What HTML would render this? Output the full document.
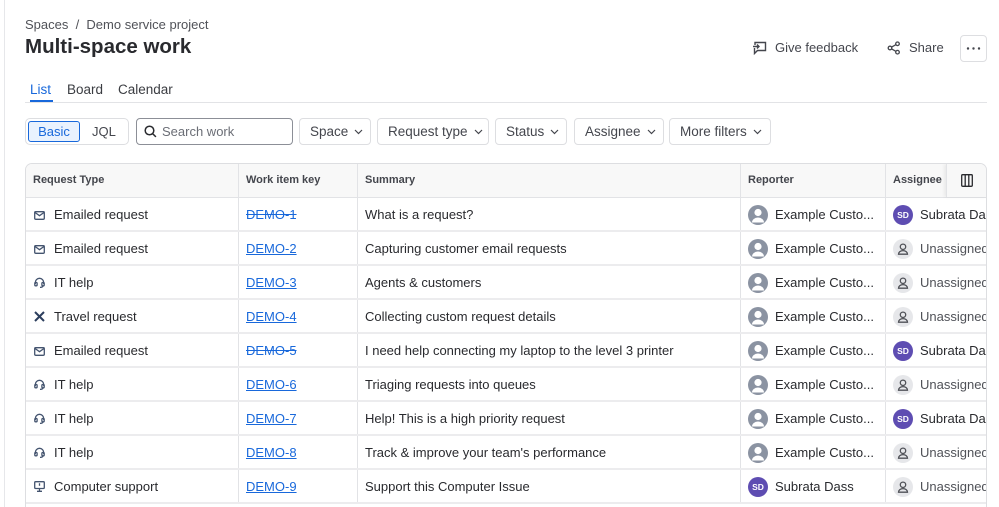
<!DOCTYPE html>
<html><head><meta charset="utf-8">
<style>
*{box-sizing:border-box;margin:0;padding:0}
html,body{width:999px;height:507px;overflow:hidden}
body{background:#fff;font-family:"Liberation Sans",sans-serif;color:#292a2e;position:relative}
.a{position:absolute;white-space:nowrap}
.btn{position:absolute;height:27px;top:118px;border:1px solid #dddee1;border-radius:4px;font-size:13.5px;color:#44464d;display:flex;align-items:center;padding-left:10px}
.btn svg{margin-left:6px}
.tbl{position:absolute;left:25px;top:163px;width:962px;height:344px;border:1px solid #dddee1;border-bottom:none;border-radius:7px 7px 0 0;overflow:hidden}
.hd{position:absolute;left:0;top:0;width:100%;height:34px;background:#f8f8f8;border-bottom:1px solid #e2e3e6}
.hc{position:absolute;top:0;height:33px;line-height:33px;font-size:11px;font-weight:bold;color:#44464d;padding-left:7px;border-left:1px solid #e2e3e6}
.row{position:absolute;left:0;width:100%;height:34px;border-bottom:2px solid #ececee}
.c{position:absolute;top:0;height:32px;line-height:33px;font-size:13px;color:#292a2e;border-left:1px solid #e2e3e6;white-space:nowrap;overflow:hidden}
.lk{color:#1868db;text-decoration:underline}
.st{text-decoration:line-through}
.av{display:inline-block;width:20px;height:20px;border-radius:50%;vertical-align:middle;margin-right:7px;position:relative;top:-1px;text-align:center;line-height:20px;font-size:8.5px;color:#fff;font-weight:bold}
.sd{background:#5e4db2}
.un{background:#e6e7ea}
.ex{background:#8b93a2}
</style></head><body>
<div class="a" style="left:4px;top:0;width:1px;height:507px;background:#e6e7ea"></div>
<div class="a" style="left:25px;top:17px;font-size:13px;color:#505258">Spaces &nbsp;/&nbsp; Demo service project</div>
<div class="a" style="left:25px;top:35px;font-size:20.5px;font-weight:bold;color:#292a2e">Multi-space work</div>

<svg class="a" style="left:752px;top:41px" width="15" height="14" viewBox="0 0 15 14" fill="none" stroke="#44464d" stroke-width="1.4"><path d="M3 4V1.5h10.5v8H5.5L2.5 12.5V7"/><path d="M1 5.5h6M5 3.5l2 2-2 2"/></svg>
<div class="a" style="left:775px;top:40px;font-size:13px;color:#44464d">Give feedback</div>
<svg class="a" style="left:887px;top:41px" width="14" height="14" viewBox="0 0 14 14" fill="none" stroke="#44464d" stroke-width="1.3"><circle cx="3" cy="7" r="1.8"/><circle cx="10.5" cy="2.8" r="1.8"/><circle cx="10.5" cy="11.2" r="1.8"/><path d="M4.6 6.1l4.3-2.4M4.6 7.9l4.3 2.4"/></svg>
<div class="a" style="left:909px;top:40px;font-size:13px;color:#44464d">Share</div>
<div class="a" style="left:960px;top:35px;width:27px;height:27px;border:1px solid #dddee1;border-radius:4px"></div>
<svg class="a" style="left:966px;top:47px" width="15" height="3" viewBox="0 0 15 3" fill="#44464d"><circle cx="2" cy="1.5" r="1.2"/><circle cx="7.5" cy="1.5" r="1.2"/><circle cx="13" cy="1.5" r="1.2"/></svg>

<div class="a" style="left:30px;top:82px;font-size:13.5px;color:#1868db">List</div>
<div class="a" style="left:30px;top:100px;width:23px;height:2px;background:#1868db"></div>
<div class="a" style="left:67px;top:82px;font-size:13.5px;color:#3b3d42">Board</div>
<div class="a" style="left:118px;top:82px;font-size:13.5px;color:#3b3d42">Calendar</div>
<div class="a" style="left:25px;top:102px;width:962px;height:1px;background:#e2e3e6"></div>

<div class="a" style="left:25px;top:118px;width:104px;height:27px;border:1px solid #dddee1;border-radius:5px"></div>
<div class="a" style="left:28px;top:121px;width:52px;height:21px;border:1px solid #1868db;background:#e9f2fe;border-radius:3px;font-size:13px;color:#1868db;text-align:center;line-height:19px">Basic</div>
<div class="a" style="left:92px;top:124px;font-size:13px;color:#44464d">JQL</div>
<div class="a" style="left:136px;top:118px;width:157px;height:27px;border:1px solid #8c8f97;border-radius:4px"></div>
<svg class="a" style="left:144px;top:125px" width="13" height="13" viewBox="0 0 13 13" fill="none" stroke="#292a2e" stroke-width="1.5"><circle cx="5.5" cy="5.5" r="4.3"/><path d="M8.6 8.6l3.3 3.3"/></svg>
<div class="a" style="left:162px;top:124px;font-size:13px;color:#6b6e76">Search work</div>

<div class="btn" style="left:299px;width:72px">Space<svg width="9" height="6" viewBox="0 0 9 6" fill="none" stroke="#44464d" stroke-width="1.2"><path d="M1 1l3.5 3.5L8 1"/></svg></div>
<div class="btn" style="left:377px;width:112px">Request type<svg width="9" height="6" viewBox="0 0 9 6" fill="none" stroke="#44464d" stroke-width="1.2"><path d="M1 1l3.5 3.5L8 1"/></svg></div>
<div class="btn" style="left:495px;width:72px">Status<svg width="9" height="6" viewBox="0 0 9 6" fill="none" stroke="#44464d" stroke-width="1.2"><path d="M1 1l3.5 3.5L8 1"/></svg></div>
<div class="btn" style="left:574px;width:90px">Assignee<svg width="9" height="6" viewBox="0 0 9 6" fill="none" stroke="#44464d" stroke-width="1.2"><path d="M1 1l3.5 3.5L8 1"/></svg></div>
<div class="btn" style="left:669px;width:102px">More filters<svg width="9" height="6" viewBox="0 0 9 6" fill="none" stroke="#44464d" stroke-width="1.2"><path d="M1 1l3.5 3.5L8 1"/></svg></div>

<div class="tbl">
<div class="hd">
<div class="hc" style="left:0;border-left:none">Request Type</div>
<div class="hc" style="left:212px">Work item key</div>
<div class="hc" style="left:331px">Summary</div>
<div class="hc" style="left:714px">Reporter</div>
<div class="hc" style="left:859px;width:61px">Assignee</div>
<div class="hc" style="left:920px;width:42px;box-shadow:-2px 0 3px rgba(0,0,0,0.06)"><svg style="position:absolute;left:14px;top:10px" width="12" height="13" viewBox="0 0 12 13" fill="none" stroke="#292a2e" stroke-width="1.3"><rect x="0.7" y="0.7" width="10.6" height="11.6" rx="1"/><path d="M4.2 1v11M7.8 1v11"/></svg></div>
</div>
<div id="rows"></div>
</div>

<script>
var mail='<svg width="11" height="9" viewBox="0 0 11 9" fill="none" stroke="#44546f" stroke-width="1.3"><rect x="0.7" y="0.7" width="9.6" height="7.6" rx="1"/><path d="M1 1.5l4.5 3.2L10 1.5"/></svg>';
var head='<svg width="11" height="11" viewBox="0 0 11 11" fill="none" stroke="#44546f" stroke-width="1.3"><path d="M1.3 7V5.5a4.2 4.2 0 0 1 8.4 0V7"/><rect x="0.8" y="5.5" width="2.3" height="3.3" rx="0.8"/><rect x="7.9" y="5.5" width="2.3" height="3.3" rx="0.8"/><path d="M9 8.8q0 1.5-3 1.6"/></svg>';
var plane='<svg width="11" height="11" viewBox="0 0 11 11" fill="none" stroke="#2c3e5d" stroke-width="2"><path d="M1 1l9 9M10 1l-9 9"/></svg>';
var comp='<svg width="11" height="11" viewBox="0 0 11 11" fill="none" stroke="#44546f" stroke-width="1.3"><rect x="0.7" y="0.7" width="9.6" height="6.8" rx="1"/><path d="M5.5 7.5v2.5M3 10.3h5M5.5 2.3v2.5"/></svg>';
var exav='<span class="av ex"><svg width="20" height="20" viewBox="0 0 20 20"><circle cx="10" cy="7.5" r="3.6" fill="#fff"/><path d="M4 17.5a6 5 0 0 1 12 0z" fill="#fff"/></svg></span>';
var unav='<span class="av un"><svg width="20" height="20" viewBox="0 0 20 20" fill="none" stroke="#505258" stroke-width="1.3"><circle cx="10" cy="7.8" r="2.7"/><path d="M5.5 15.2a4.5 3.6 0 0 1 9 0z"/></svg></span>';
var sdav='<span class="av sd">SD</span>';
var R=[
[mail,'Emailed request','DEMO-1',1,'What is a request?',0,1],
[mail,'Emailed request','DEMO-2',0,'Capturing customer email requests',0,0],
[head,'IT help','DEMO-3',0,'Agents &amp; customers',0,0],
[plane,'Travel request','DEMO-4',0,'Collecting custom request details',0,0],
[mail,'Emailed request','DEMO-5',1,'I need help connecting my laptop to the level 3 printer',0,1],
[head,'IT help','DEMO-6',0,'Triaging requests into queues',0,0],
[head,'IT help','DEMO-7',0,'Help! This is a high priority request',0,1],
[head,'IT help','DEMO-8',0,"Track &amp; improve your team's performance",0,0],
[comp,'Computer support','DEMO-9',0,'Support this Computer Issue',1,0]];
var h='';
R.forEach(function(r,i){
h+='<div class="row" style="top:'+(34+i*34)+'px">'+
'<div class="c" style="left:0;width:212px;border-left:none;padding-left:8px"><span style="display:inline-block;width:12px;position:relative;top:1px">'+r[0]+'</span><span style="margin-left:8px">'+r[1]+'</span></div>'+
'<div class="c" style="left:212px;width:119px;padding-left:7px"><span class="lk'+(r[3]?' st':'')+'">'+r[2]+'</span></div>'+
'<div class="c" style="left:331px;width:383px;padding-left:7px">'+r[4]+'</div>'+
'<div class="c" style="left:714px;width:145px;padding-left:7px">'+(r[5]?sdav+'Subrata Dass':exav+'Example Custo...')+'</div>'+
'<div class="c" style="left:859px;width:103px;padding-left:7px">'+(r[6]?sdav+'Subrata Dass':unav+'<span style="color:#505258">Unassigned</span>')+'</div>'+
'</div>';});
document.getElementById('rows').innerHTML=h;
</script>
</body></html>
